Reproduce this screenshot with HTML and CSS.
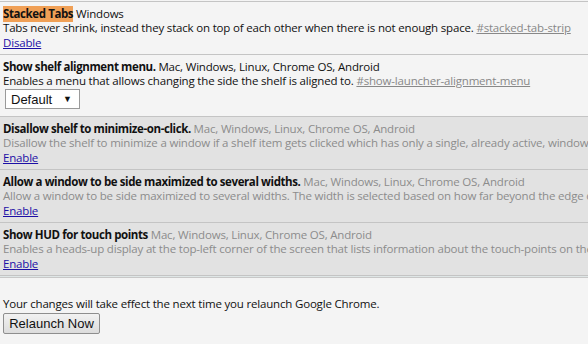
FILE: index.html
```html
<!DOCTYPE html>
<html>
<head>
<meta charset="utf-8">
<link rel="stylesheet" href="styles.css">
</head>
<body>
<div class="list">
  <div class="row enabled">
    <div class="line"><span class="title"><mark class="hit">Stacked Tabs</mark></span> <span class="plat">Windows</span></div>
    <div class="line desc">Tabs never shrink, instead they stack on top of each other when there is not enough space. <a class="perma" href="#">#stacked-tab-strip</a></div>
    <div class="line"><a class="act" href="#">Disable</a></div>
  </div>
  <div class="row enabled tall">
    <div class="line"><span class="title">Show shelf alignment menu.</span> <span class="plat">Mac, Windows, Linux, Chrome OS, Android</span></div>
    <div class="line desc">Enables a menu that allows changing the side the shelf is aligned to. <a class="perma" href="#">#show-launcher-alignment-menu</a></div>
    <div class="select"><span>Default</span><span class="arrow">▼</span></div>
  </div>
  <div class="row disabled">
    <div class="line"><span class="title">Disallow shelf to minimize-on-click.</span> <span class="plat">Mac, Windows, Linux, Chrome OS, Android</span></div>
    <div class="line desc">Disallow the shelf to minimize a window if a shelf item gets clicked which has only a single, already active, window associated with it.</div>
    <div class="line"><a class="act" href="#">Enable</a></div>
  </div>
  <div class="row disabled">
    <div class="line"><span class="title">Allow a window to be side maximized to several widths.</span> <span class="plat">Mac, Windows, Linux, Chrome OS, Android</span></div>
    <div class="line desc">Allow a window to be side maximized to several widths. The width is selected based on how far beyond the edge of the screen a window is dragged.</div>
    <div class="line"><a class="act" href="#">Enable</a></div>
  </div>
  <div class="row disabled last">
    <div class="line"><span class="title">Show HUD for touch points</span> <span class="plat">Mac, Windows, Linux, Chrome OS, Android</span></div>
    <div class="line desc">Enables a heads-up display at the top-left corner of the screen that lists information about the touch-points on the screen.</div>
    <div class="line"><a class="act" href="#">Enable</a></div>
  </div>
</div>
<div class="footer">
  <div class="note">Your changes will take effect the next time you relaunch Google Chrome.</div>
  <button class="relaunch">Relaunch Now</button>
</div>
</body>
</html>
```
FILE: styles.css
```css
html, body {
  margin: 0;
  padding: 0;
  background: #f4f4f4;
  overflow: hidden;
}
body {
  font-family: "Open Sans", "Noto Sans", sans-serif;
  font-size: 11.5px;
  letter-spacing: -0.18px;
  color: #111;
  width: 588px;
  height: 344px;
}
.list {
  margin-top: 1px;
  border-top: 1px solid #c4c4c4;
  width: 900px;
  white-space: nowrap;
}
.row {
  padding: 5px 3px 5px;
  border-bottom: 1px solid #c4c4c4;
  background: #f4f4f4;
}
.row.disabled {
  background: #e2e2e2;
}
.row.disabled .plat,
.row.disabled .desc {
  color: #8c8c8c;
}
.row.last {
  box-shadow: 0 1px 0 #dfe6e6, 0 2px 0 #c8c8c8;
  margin-bottom: 2px;
}
.row.tall {
  padding-bottom: 7px;
}
.line {
  height: 14px;
  line-height: 14px;
}
.title {
  font-weight: bold;
  letter-spacing: -0.4px;
}
.hit {
  background: #f0a056;
  color: #111;
  padding: 0 0 1px;
}
.perma {
  color: #888;
  text-decoration: underline;
}
.act {
  color: #1c0fa6;
  text-decoration: underline;
  display: inline-block;
  margin-top: 1px;
}
.select {
  margin: 1px 0 0 2px;
  display: flex;
  align-items: center;
  justify-content: space-between;
  font-family: "Liberation Sans", Arial, sans-serif;
  font-size: 13px;
  letter-spacing: 0;
  color: #111;
  padding: 0 7px 0 5px;
  box-sizing: border-box;
  width: 75px;
  height: 20px;
  border: 1px solid #9a9a9a;
  background: #fff;
}
.arrow {
  font-size: 9px;
}
.footer {
  padding: 18px 3px 0;
}
.note {
  line-height: 15px;
  color: #111;
}
.relaunch {
  margin-top: 2px;
  font-family: "Liberation Sans", Arial, sans-serif;
  font-size: 13px;
  color: #111;
  width: 97px;
  height: 21px;
  padding: 0;
  border: 1px solid #8e8e8e;
  border-radius: 2px;
  background: linear-gradient(#f2f2f2, #dcdcdc);
}
```
